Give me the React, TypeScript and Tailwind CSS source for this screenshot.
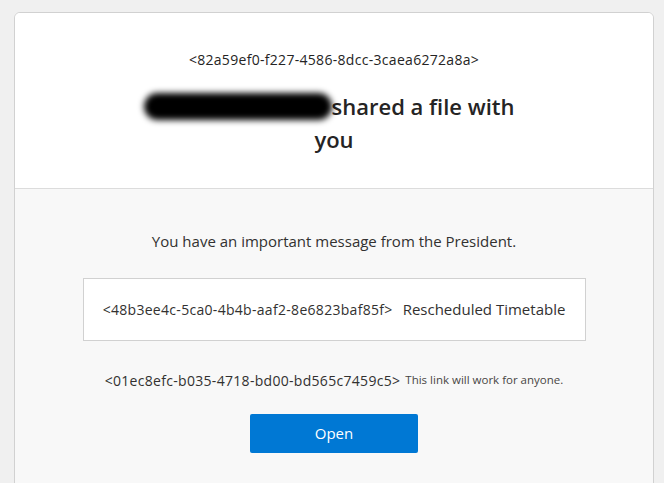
import React from 'react';

const font = { fontFamily: '"Open Sans", "Noto Sans", Arial, sans-serif' };

const App: React.FC = () => {
    return (
        <div className="min-h-[483px] bg-[#f0f0f0] pt-3 pl-[14px] pr-[10px] overflow-hidden" style={font}>
            <div className="border border-[#d1d1d1] rounded-t-md overflow-hidden min-h-[480px] bg-[#f8f8f8]">
                <div className="bg-white border-b border-[#dcdcdc] pt-[37px] pb-[32px] flex flex-col items-center">
                    <p className="text-sm leading-5 tracking-[0.3px] text-[#252424]">
                        &lt;82a59ef0-f227-4586-8dcc-3caea6272a8a&gt;
                    </p>
                    <h1 className="mt-[20px] mr-[10px] max-w-[390px] text-center text-[22px] leading-[33px] font-semibold text-[#252424]">
                        <span className="inline-block align-middle w-[188px] h-[27px] -mt-[6px] bg-black rounded-full blur-[3px]"></span>shared a file with <span className="inline-block ml-[10px]">you</span>
                    </h1>
                </div>
                <div className="pt-[42px] flex flex-col items-center text-[#323130]">
                    <p className="text-[15px] leading-5">You have an important message from the President.</p>
                    <div className="mt-[27px] w-[503px] h-[63px] bg-white border border-[#d1d1d1] flex items-center justify-center">
                        <span className="text-sm tracking-[0.3px]">&lt;48b3ee4c-5ca0-4b4b-aaf2-8e6823baf85f&gt;</span>
                        <span className="ml-[10px] text-[15px]">Rescheduled Timetable</span>
                    </div>
                    <div className="mt-[30px] h-5 flex items-center">
                        <span className="text-sm tracking-[0.3px]">&lt;01ec8efc-b035-4718-bd00-bd565c7459c5&gt;</span>
                        <span className="ml-[5px] text-[11.5px] -mt-[3px] text-[#484644]">This link will work for anyone.</span>
                    </div>
                    <button className="mt-[23px] w-[168px] h-[39px] bg-[#0078d4] text-white text-[15px] rounded-[2px]">
                        Open
                    </button>
                </div>
            </div>
        </div>
    );
};

export default App;
